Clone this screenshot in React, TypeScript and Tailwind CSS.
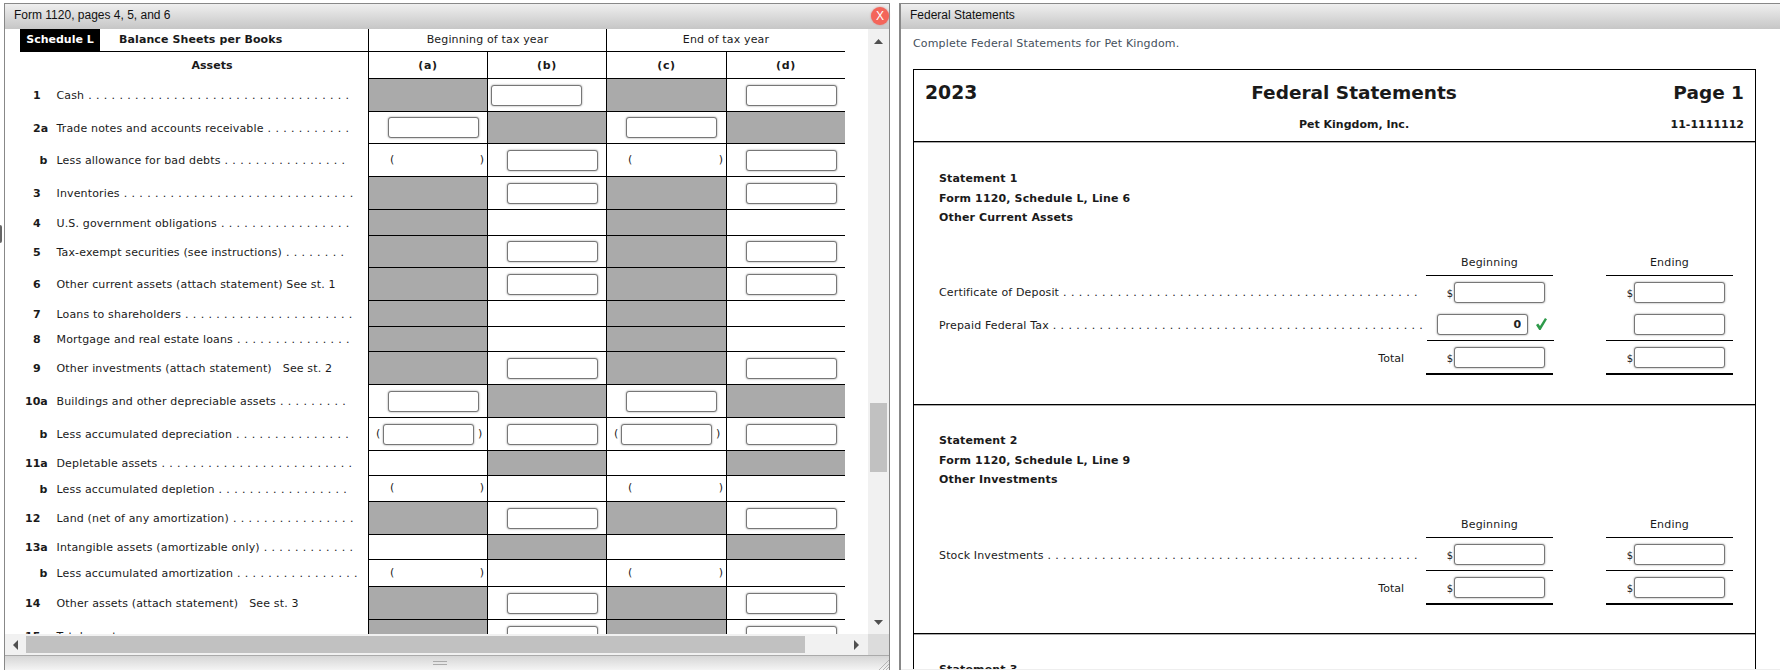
type CellKind = "g" | "e" | "i" | "l" | "p" | "q";

type Row = {
  no: string;
  text: string;
  dots?: number;
  h: string;
  cells: CellKind[];
};

const colWidths = ["w-[119px]", "w-[119px]", "w-[120px]", "w-[119px]"];

const rows: Row[] = [
  { no: "1", text: "Cash", dots: 34, h: "h-[33px]", cells: ["g", "l", "g", "i"] },
  { no: "2a", text: "Trade notes and accounts receivable", dots: 11, h: "h-[32px]", cells: ["i", "g", "i", "g"] },
  { no: "b", text: "Less allowance for bad debts", dots: 16, h: "h-[33px]", cells: ["p", "i", "p", "i"] },
  { no: "3", text: "Inventories", dots: 30, h: "h-[33px]", cells: ["g", "i", "g", "i"] },
  { no: "4", text: "U.S. government obligations", dots: 17, h: "h-[26px]", cells: ["g", "e", "g", "e"] },
  { no: "5", text: "Tax-exempt securities (see instructions)", dots: 8, h: "h-[32px]", cells: ["g", "i", "g", "i"] },
  { no: "6", text: "Other current assets (attach statement) See st. 1", h: "h-[33px]", cells: ["g", "i", "g", "i"] },
  { no: "7", text: "Loans to shareholders", dots: 22, h: "h-[26px]", cells: ["g", "e", "g", "e"] },
  { no: "8", text: "Mortgage and real estate loans", dots: 15, h: "h-[25px]", cells: ["g", "e", "g", "e"] },
  { no: "9", text: "Other investments (attach statement)   See st. 2", h: "h-[33px]", cells: ["g", "i", "g", "i"] },
  { no: "10a", text: "Buildings and other depreciable assets", dots: 9, h: "h-[33px]", cells: ["i", "g", "i", "g"] },
  { no: "b", text: "Less accumulated depreciation", dots: 15, h: "h-[33px]", cells: ["q", "i", "q", "i"] },
  { no: "11a", text: "Depletable assets", dots: 25, h: "h-[25px]", cells: ["e", "g", "e", "g"] },
  { no: "b", text: "Less accumulated depletion", dots: 17, h: "h-[26px]", cells: ["p", "e", "p", "e"] },
  { no: "12", text: "Land (net of any amortization)", dots: 16, h: "h-[33px]", cells: ["g", "i", "g", "i"] },
  { no: "13a", text: "Intangible assets (amortizable only)", dots: 12, h: "h-[25px]", cells: ["e", "g", "e", "g"] },
  { no: "b", text: "Less accumulated amortization", dots: 16, h: "h-[27px]", cells: ["p", "e", "p", "e"] },
  { no: "14", text: "Other assets (attach statement)   See st. 3", h: "h-[33px]", cells: ["g", "i", "g", "i"] },
  { no: "15", text: "Total assets", dots: 28, h: "h-[33px]", cells: ["g", "i", "g", "i"] },
];

function Field({ value }: { value?: string }) {
  return (
    <input
      type="text"
      defaultValue={value}
      className="box-border h-[21px] w-[91px] shrink-0 rounded-[3px] border border-[#777] bg-white pr-[6px] text-right text-[11px] font-bold text-[#222] shadow-[0_0_2px_#888] outline-none"
    />
  );
}

function Dots({ count }: { count: number }) {
  return <span className="ml-[4px] tracking-[4.3px]">{".".repeat(count)}</span>;
}

function Cell({ kind, width }: { kind: CellKind; width: string }) {
  const base = `box-border flex h-full shrink-0 items-center border-b border-l border-black ${width}`;
  if (kind === "g") return <div className={`${base} bg-[#aaa]`} />;
  if (kind === "e") return <div className={base} />;
  if (kind === "i")
    return (
      <div className={`${base} pl-[19px]`}>
        <Field />
      </div>
    );
  if (kind === "l")
    return (
      <div className={`${base} pl-[3px]`}>
        <Field />
      </div>
    );
  if (kind === "p")
    return (
      <div className={`${base} justify-between pl-[21px] pr-[3px]`}>
        <span>(</span>
        <span>)</span>
      </div>
    );
  return (
    <div className={`${base} pl-[7px]`}>
      <span className="w-[7px] shrink-0">(</span>
      <Field />
      <span className="ml-[4px]">)</span>
    </div>
  );
}

function AssetRow({ row }: { row: Row }) {
  const noPad =
    row.no === "b" ? "pl-[34.5px]" : /^\d\d/.test(row.no) ? "pl-[20px]" : "pl-[28px]";
  return (
    <div className={`flex ${row.h}`}>
      <div className="flex w-[363px] shrink-0 items-center whitespace-pre pt-[2px] tracking-[0.15px]">
        <span className={`w-[51.5px] shrink-0 font-bold tracking-normal ${noPad}`}>{row.no}</span>
        <span>{row.text}</span>
        {row.dots ? <Dots count={row.dots} /> : null}
      </div>
      {row.cells.map((c, i) => (
        <Cell key={i} kind={c} width={colWidths[i]} />
      ))}
    </div>
  );
}

function Triangle({ dir }: { dir: "up" | "down" | "left" | "right" }) {
  const points = {
    up: "0,5 9,5 4.5,0",
    down: "0,0 9,0 4.5,5",
    left: "5,0 5,10 0,5",
    right: "0,0 0,10 5,5",
  }[dir];
  const size = dir === "up" || dir === "down" ? "h-[5px] w-[9px]" : "h-[10px] w-[5px]";
  return (
    <svg className={size} viewBox={dir === "up" || dir === "down" ? "0 0 9 5" : "0 0 5 10"}>
      <polygon points={points} fill="#505050" />
    </svg>
  );
}

function FormWindow() {
  return (
    <div className="relative flex h-full w-[886px] shrink-0 flex-col border-x border-t border-[#888]">
      <div className="flex h-[25px] shrink-0 items-center bg-gradient-to-b from-[#efefef] to-[#c6c6c6] pb-[3px] pl-[9px] font-['Liberation_Sans',Arial,sans-serif] text-[12px] text-[#111]">
        Form 1120, pages 4, 5, and 6
      </div>

      <div className="flex h-[605px] shrink-0">
        <div className="w-[863px] shrink-0 overflow-hidden">
          <div className="flex h-[23px]">
            <div className="ml-[15px] flex h-full w-[348px] shrink-0 items-center border-b border-black font-bold">
              <div className="flex h-full w-[80px] items-center justify-center bg-black text-white">Schedule L</div>
              <div className="ml-[19px] tracking-[0.1px]">Balance Sheets per Books</div>
            </div>
            <div className="flex h-full w-[238px] shrink-0 items-center justify-center border-b border-l border-black tracking-[0.15px]">
              Beginning of tax year
            </div>
            <div className="flex h-full w-[239px] shrink-0 items-center justify-center border-b border-l border-black tracking-[0.15px]">
              End of tax year
            </div>
          </div>

          <div className="flex h-[27px]">
            <div className="flex w-[363px] shrink-0 items-center justify-center pl-[51px] pt-[2px] font-bold">Assets</div>
            {["(a)", "(b)", "(c)", "(d)"].map((t, i) => (
              <div
                key={t}
                className={`flex h-full shrink-0 items-center justify-center border-b border-l border-black pt-[2px] font-bold tracking-[0.7px] ${colWidths[i]}`}
              >
                {t}
              </div>
            ))}
          </div>

          {rows.map((r, i) => (
            <AssetRow key={i} row={r} />
          ))}
        </div>

        <div className="flex w-[21px] shrink-0 flex-col bg-[#f1f1f1]">
          <div className="flex h-[24px] shrink-0 items-center justify-center">
            <Triangle dir="up" />
          </div>
          <div className="mx-auto mt-[350px] h-[69px] w-[17px] shrink-0 bg-[#c1c1c1]" />
          <div className="mt-auto flex h-[24px] shrink-0 items-center justify-center">
            <Triangle dir="down" />
          </div>
        </div>
      </div>

      <div className="flex h-[21px] shrink-0 bg-[#f1f1f1]">
        <div className="flex w-[21px] shrink-0 items-center justify-center">
          <Triangle dir="left" />
        </div>
        <div className="mt-[2px] h-[17px] w-[779px] shrink-0 bg-[#c1c1c1]" />
        <div className="flex flex-1 items-center justify-end pr-[9px]">
          <Triangle dir="right" />
        </div>
        <div className="w-[21px] shrink-0 bg-[#dcdcdc]" />
      </div>

      <div className="relative flex flex-1 items-center justify-center border-t border-[#aaa] bg-gradient-to-b from-[#d6d6d6] to-[#f4f4f4]">
        <div className="ml-[-14px] h-[4px] w-[14px] border-y border-[#aaa]" />
        <svg className="absolute bottom-0 right-0 h-[11px] w-[11px]" viewBox="0 0 11 11">
          <path d="M11 1 1 11M11 5 5 11M11 8 8 11" stroke="#b5b5b5" strokeWidth="1" />
        </svg>
      </div>

      <div className="absolute right-0 top-[3px] flex h-[18px] w-[18px] items-center justify-center rounded-full bg-[#f4655a] font-['Liberation_Sans',Arial,sans-serif] text-[12px] text-white shadow-[0_0_2px_#c88]">
        X
      </div>
    </div>
  );
}

type StatementRow = {
  label?: string;
  dots?: number;
  total?: boolean;
  h: string;
  begin: "money" | "check";
  end: "money" | "plain";
  rule?: "thin" | "thick";
};

function AmountCell({ kind, rule }: { kind: "money" | "check" | "plain"; rule?: "thin" | "thick" }) {
  const ruleClass = rule === "thick" ? "border-b-2 border-black" : rule === "thin" ? "border-b border-black" : "";
  return (
    <div className={`flex h-full w-[127px] shrink-0 items-center justify-end ${ruleClass} ${kind === "check" ? "pr-[7px]" : "pr-[8px]"}`}>
      {kind === "money" && <span className="mr-[1px] mt-[2px] text-[10px]">$</span>}
      <Field value={kind === "check" ? "0" : undefined} />
      {kind === "check" && (
        <svg className="ml-[8px] h-[12px] w-[11px]" viewBox="0 0 11 12">
          <polygon points="0,7 2.2,5.4 4,8 9,0 11,1.2 4.6,12 3.2,12" fill="#2e9a4a" />
        </svg>
      )}
    </div>
  );
}

function Statement({
  lines,
  top,
  headTop,
  headH,
  bottom,
  rows: stRows,
}: {
  lines: string[];
  top: string;
  headTop: string;
  headH: string;
  bottom: string;
  rows: StatementRow[];
}) {
  return (
    <div className={`border-b border-black shadow-[0_1px_0_#aaa] ${bottom}`}>
      <div className={`pl-[25px] font-bold leading-[19.5px] tracking-[0.15px] ${top}`}>
        {lines.map((l) => (
          <div key={l}>{l}</div>
        ))}
      </div>
      <div className={`flex pr-[22px] ${headTop}`}>
        <div className="flex-1" />
        <div className={`flex w-[127px] items-center justify-center border-b border-black pt-[2px] tracking-[0.2px] ${headH}`}>Beginning</div>
        <div className="w-[53px]" />
        <div className={`flex w-[127px] items-center justify-center border-b border-black pt-[2px] tracking-[0.2px] ${headH}`}>Ending</div>
      </div>
      {stRows.map((r, i) => (
        <div key={i} className={`flex pr-[22px] ${r.h}`}>
          {r.total ? (
            <div className="flex flex-1 items-center justify-end pr-[22px] pt-[2px]">Total</div>
          ) : (
            <div className="flex flex-1 items-center whitespace-pre pl-[25px] pt-[3px] tracking-[0.15px]">
              <span>{r.label}</span>
              {r.dots ? <Dots count={r.dots} /> : null}
            </div>
          )}
          <AmountCell kind={r.begin} rule={r.rule} />
          <div className="w-[53px]" />
          <AmountCell kind={r.end} rule={r.rule} />
        </div>
      ))}
    </div>
  );
}

function StatementsWindow() {
  return (
    <div className="ml-[9px] flex h-full flex-1 flex-col border-l-2 border-t border-[#888]">
      <div className="flex h-[25px] shrink-0 items-center bg-gradient-to-b from-[#efefef] to-[#c6c6c6] pb-[3px] pl-[9px] font-['Liberation_Sans',Arial,sans-serif] text-[12px] text-[#111]">
        Federal Statements
      </div>
      <div className="flex-1 overflow-hidden">
        <div className="h-[40px] pl-[12px] pt-[7px] leading-[16px] tracking-[0.16px] text-[#45505c]">
          Complete Federal Statements for Pet Kingdom.
        </div>
        <div className="ml-[12px] w-[843px] border border-black">
          <div className="h-[72px] border-b border-black pt-[12px] shadow-[0_1px_0_#aaa]">
            <div className="grid grid-cols-[279px_300px_1fr] px-[11px]">
              <div className="h-[22px] text-[18.8px] font-bold leading-[22px]">2023</div>
              <div className="h-[22px] text-center text-[18.5px] font-bold leading-[22px]">Federal Statements</div>
              <div className="h-[22px] text-right text-[18.5px] font-bold leading-[22px]">Page 1</div>
              <div className="mt-[13px]" />
              <div className="mt-[13px] h-[16px] text-center font-bold leading-[16px]">Pet Kingdom, Inc.</div>
              <div className="mt-[13px] h-[16px] text-right font-bold leading-[16px]">11-1111112</div>
            </div>
          </div>
          <Statement
            lines={["Statement 1", "Form 1120, Schedule L, Line 6", "Other Current Assets"]}
            top="pt-[27px]"
            headTop="mt-[22.5px]"
            headH="h-[26px]"
            bottom="pb-[29px]"
            rows={[
              { label: "Certificate of Deposit", dots: 46, h: "h-[32px]", begin: "money", end: "money" },
              { label: "Prepaid Federal Tax", dots: 48, h: "h-[33px]", begin: "check", end: "plain", rule: "thin" },
              { total: true, h: "h-[34px]", begin: "money", end: "money", rule: "thick" },
            ]}
          />
          <Statement
            lines={["Statement 2", "Form 1120, Schedule L, Line 9", "Other Investments"]}
            top="pt-[26px]"
            headTop="mt-[21.5px]"
            headH="h-[27px]"
            bottom="pb-[28px]"
            rows={[
              { label: "Stock Investments", dots: 48, h: "h-[33px]", begin: "money", end: "money", rule: "thin" },
              { total: true, h: "h-[34px]", begin: "money", end: "money", rule: "thick" },
            ]}
          />
          <div className="pl-[25px] pt-[26px] font-bold leading-[19.5px] tracking-[0.15px]">Statement 3</div>
        </div>
      </div>
      <div className="h-[1px] shrink-0 bg-[#eee]" />
    </div>
  );
}

export default function App() {
  return (
    <div className="relative flex h-[670px] w-[1780px] overflow-hidden bg-white pl-[4px] pt-[3px] font-['DejaVu_Sans',Verdana,sans-serif] text-[11px] text-[#1a1a1a]">
      <div className="absolute left-0 top-[225px] h-[18px] w-[2px] rounded-r-full bg-[#666]" />
      <FormWindow />
      <StatementsWindow />
    </div>
  );
}
